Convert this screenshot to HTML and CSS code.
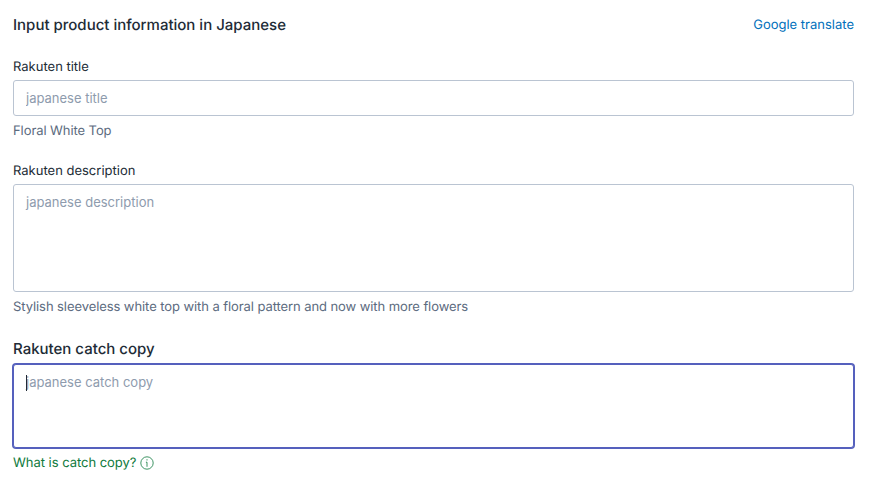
FILE: index.html
```html
<!DOCTYPE html>
<html lang="en">
<head>
<meta charset="utf-8">
<title>Input product information</title>
<link rel="stylesheet" href="styles.css">
</head>
<body>
<main class="form">
  <header class="head">
    <h2 class="title">Input product information in Japanese</h2>
    <a class="link" href="#">Google translate</a>
  </header>
  <div class="field">
    <label class="label" for="t">Rakuten title</label>
    <input class="control input" id="t" type="text" placeholder="japanese title">
    <p class="hint">Floral White Top</p>
  </div>
  <div class="field field-wide">
    <label class="label" for="d">Rakuten description</label>
    <textarea class="control area-lg" id="d" placeholder="japanese description"></textarea>
    <p class="hint">Stylish sleeveless white top with a floral pattern and now with more flowers</p>
  </div>
  <div class="field">
    <label class="label label-strong" for="c">Rakuten catch copy</label>
    <div class="focus-wrap">
      <textarea class="control area-sm focused" id="c" placeholder="japanese catch copy"></textarea>
      <span class="caret"></span>
    </div>
    <p class="hint hint-green">What is catch copy?
      <svg class="info" viewBox="0 0 14 14" width="14" height="14" aria-hidden="true"><circle cx="7" cy="7" r="6.2"/><path d="M7 3.2v1.3M5.9 6.2H7v4.6"/></svg>
    </p>
  </div>
</main>
</body>
</html>
```
FILE: styles.css
```css
* { box-sizing: border-box; }
html, body { margin: 0; background: #fff; }
body {
  font-family: Inter, "Liberation Sans", sans-serif;
  font-size: 13px;
  line-height: 20px;
  color: #212b36;
  overflow: hidden;
  text-rendering: geometricPrecision;
}
.form { padding: 13px 17px 0 13px; }
.head {
  display: flex;
  justify-content: space-between;
  align-items: center;
  height: 24px;
  margin-bottom: 17px;
}
.title { margin: 0; font-size: 15px; line-height: 24px; font-weight: 500; }
.link { color: #006fbb; text-decoration: none; }
.field { margin-bottom: 17px; }
.field-wide { margin-bottom: 21px; }
.label { display: block; height: 26px; padding-top: 3px; }
.label-strong { font-size: 15px; font-weight: 500; padding-top: 1px; }
.control {
  display: block;
  width: 100%;
  margin: 0;
  padding: 7px 12px;
  border: 1px solid #bac4d2;
  border-radius: 3px;
  background: #fff;
  font: inherit;
  color: inherit;
  outline: none;
  resize: none;
}
.control::placeholder { color: #8e9bad; opacity: 1; }
.input { height: 36px; }
.area-lg { height: 108px; }
.area-sm { height: 84px; }
.focused { border-color: #5560bd; box-shadow: 0 0 0 1px #5560bd; }
.focus-wrap { position: relative; }
.caret { position: absolute; left: 13px; top: 11px; width: 1px; height: 16px; background: #212b36; }
.hint { margin: 5px 0 0; color: #5c6b80; letter-spacing: -0.08px; }
.hint-green { color: #0f7a3d; letter-spacing: -0.03px; display: flex; align-items: center; gap: 4px; }
.info { fill: none; stroke: #0f7a3d; stroke-width: 0.8; }
```
